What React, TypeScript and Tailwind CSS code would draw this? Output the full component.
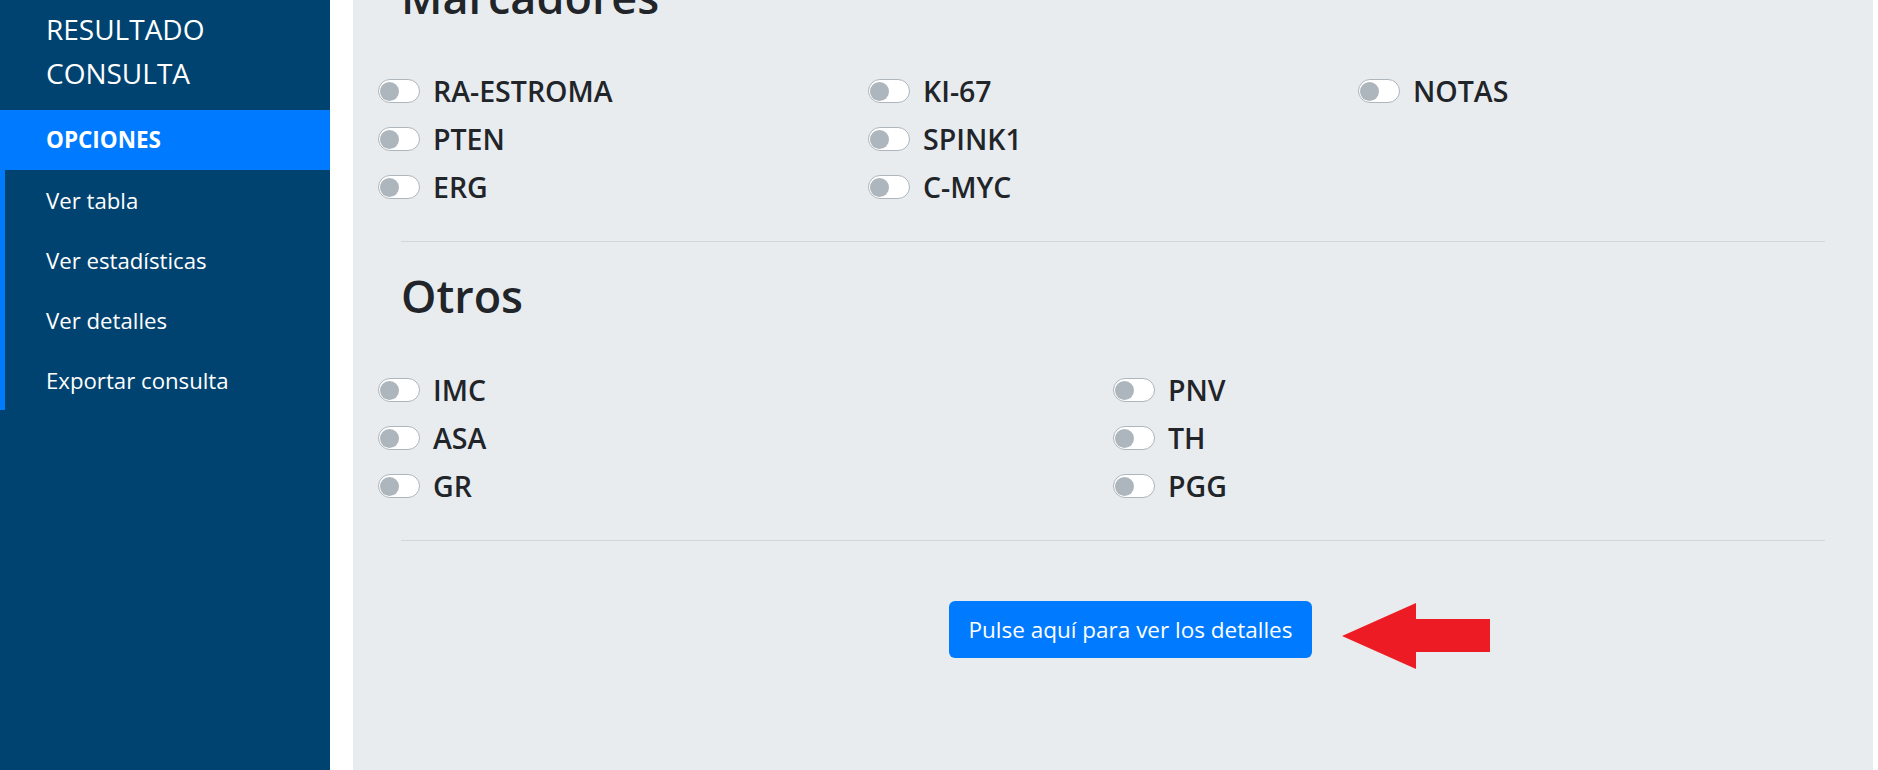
import React from "react";

const font = { fontFamily: '"Open Sans", "Noto Sans", sans-serif' };

function Toggle({ label }: { label: string }) {
  return (
    <div className="flex h-[48px] items-center">
      <div className="flex h-[24px] w-[42px] shrink-0 items-center rounded-full border border-[#adb5bd] bg-white">
        <div className="ml-[1px] h-[19px] w-[19px] rounded-full bg-[#adb5bd]" />
      </div>
      <span className="ml-[13px] text-[28.5px] font-semibold leading-none text-[#212529]">{label}</span>
    </div>
  );
}

function Column({ items }: { items: string[] }) {
  return (
    <div className="flex flex-col">
      {items.map((i) => (
        <Toggle key={i} label={i} />
      ))}
    </div>
  );
}

export default function App() {
  return (
    <div className="flex h-screen w-full overflow-hidden bg-white" style={font}>
      {/* Sidebar */}
      <aside className="flex w-[330px] shrink-0 flex-col bg-[#004370] text-white">
        <div className="pl-[46px] pt-[7px] pb-[15px] text-[28px] leading-[44px]">
          <div>RESULTADO</div>
          <div>CONSULTA</div>
        </div>
        <div className="flex h-[60px] items-center bg-[#007bff] pl-[46px] text-[22.5px] font-bold">
          OPCIONES
        </div>
        <nav className="flex flex-col border-l-[5px] border-[#007bff]">
          {["Ver tabla", "Ver estadísticas", "Ver detalles", "Exportar consulta"].map((t) => (
            <div key={t} className="flex h-[60px] items-center pl-[41px] pt-[2px] text-[22.2px]">
              {t}
            </div>
          ))}
        </nav>
      </aside>

      {/* Main */}
      <div className="flex flex-1 pl-[23px] pr-[5px]">
        <main className="flex-1 bg-[#e9ecef] px-[48px]">
          <h2 className="mt-[-30px] mb-[43px] text-[45px] font-semibold leading-[54px] text-[#212529]">
            Marcadores
          </h2>
          <div className="mx-[-23px] grid grid-cols-3">
            <Column items={["RA-ESTROMA", "PTEN", "ERG"]} />
            <Column items={["KI-67", "SPINK1", "C-MYC"]} />
            <Column items={["NOTAS"]} />
          </div>
          <div className="mt-[30px] h-px bg-[#d3d6d9]" />
          <h2 className="mt-[27px] mb-[43px] text-[45px] font-semibold leading-[54px] text-[#212529]">
            Otros
          </h2>
          <div className="mx-[-23px] grid grid-cols-2">
            <Column items={["IMC", "ASA", "GR"]} />
            <Column items={["PNV", "TH", "PGG"]} />
          </div>
          <div className="mt-[30px] h-px bg-[#d3d6d9]" />
          <div className="mt-[60px] flex items-start">
            <button className="ml-[548px] h-[57px] w-[363px] rounded-[6px] bg-[#007bff] text-[22.5px] text-white">
              Pulse aquí para ver los detalles
            </button>
            <svg className="ml-[30px] mt-[2px]" width="148" height="66" viewBox="0 0 148 66">
              <polygon points="0,33 74,0 74,16 148,16 148,49 74,49 74,66" fill="#ed1c24" />
            </svg>
          </div>
        </main>
      </div>
    </div>
  );
}
